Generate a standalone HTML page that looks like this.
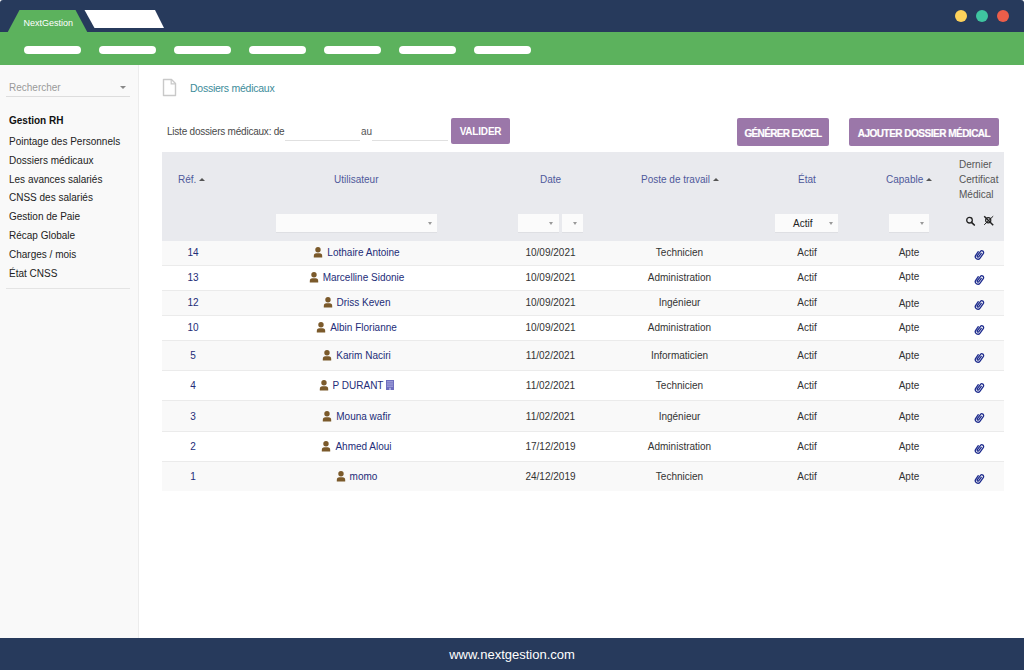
<!DOCTYPE html>
<html><head><meta charset="utf-8"><style>
*{box-sizing:border-box;margin:0;padding:0}
html,body{width:1024px;height:670px;overflow:hidden;background:#fff;font-family:"Liberation Sans",sans-serif;position:relative}
.abs{position:absolute}
.top{position:absolute;left:0;top:0;width:1024px;height:33px;background:#273a5c;border-radius:3px 3px 0 0}
.green{position:absolute;left:0;top:32px;width:1024px;height:33px;background:#5cb25d}
.pill{position:absolute;top:46px;width:57px;height:8px;border-radius:4px;background:#fff}
.dot{position:absolute;top:10px;width:12px;height:12px;border-radius:50%}
.side{position:absolute;left:0;top:65px;width:139px;height:573px;background:#f9f9f9;border-right:1px solid #ececec}
.mi{position:absolute;left:9px;font-size:10px;line-height:12px;color:#222;white-space:nowrap}
.foot{position:absolute;left:0;top:638px;width:1024px;height:32px;background:#273a5c;color:#fff;font-size:13px;text-align:center;line-height:34px}
.btn{position:absolute;background:#9b77a9;color:#fff;font-weight:bold;font-size:10px;text-align:center;border-radius:2px} .bt2{-webkit-text-stroke:0.2px #fff}
.thead{position:absolute;left:162px;top:152px;width:842px;height:89px;background:#e9eaee}
.row{position:absolute;left:162px;width:842px;border-bottom:1px solid #ebebeb}
.c{position:absolute;top:0;height:100%;display:flex;align-items:center;justify-content:center;font-size:10px;color:#333;white-space:nowrap}
.blue{color:#232d78}
.c1{left:0;width:62px} .c2{left:62px;width:265px} .c3{left:327px;width:123px} .c4{left:450px;width:135px} .c5{left:585px;width:120px} .c6{left:705px;width:84px} .c7{left:789px;width:53px;padding-left:3px}
.short .c{padding-bottom:1px} .short .c7{padding-bottom:0} .ui{margin-right:4px} .bi{margin-left:3px;margin-bottom:2px}
.h{position:absolute;font-size:10px;line-height:12px;color:#4f599b;white-space:nowrap}
.tri{display:inline-block;width:0;height:0;border-left:3px solid transparent;border-right:3px solid transparent;border-bottom:3px solid #555;vertical-align:2px;margin-left:3px}
.sel{position:absolute;background:#fbfbfb;height:18px;box-shadow:0 1px 0 #dedfe3}
.arr{position:absolute;top:8px;width:0;height:0;margin-left:0.5px;border-left:2.5px solid transparent;border-right:2.5px solid transparent;border-top:3px solid #999}
.inp{position:absolute;height:1px;background:#e0e0e0}
</style></head><body>
<div class="top"></div>
<div class="green"></div>
<svg class="abs" style="left:0;top:0" width="170" height="33" viewBox="0 0 170 33">
<polygon points="7.5,32.5 19.5,10 75.5,10 87.5,32.5" fill="#5cb25d"/>
<polygon points="84.5,10 155,10 164,28 94.5,28" fill="#fff"/>
</svg>
<div class="abs" style="left:23.5px;top:18px;font-size:9px;line-height:11px;color:#fff;white-space:nowrap">NextGestion</div>
<div class="pill" style="left:23.5px"></div><div class="pill" style="left:98.5px"></div><div class="pill" style="left:173.5px"></div><div class="pill" style="left:248.5px"></div><div class="pill" style="left:323.5px"></div><div class="pill" style="left:398.5px"></div><div class="pill" style="left:473.5px"></div>
<div class="dot" style="left:954.5px;background:#fdd15b"></div>
<div class="dot" style="left:975.5px;background:#3fc4a0"></div>
<div class="dot" style="left:996.5px;background:#ec5e4a"></div>

<div class="side">
<div class="abs" style="left:9px;top:17px;font-size:10px;line-height:12px;color:#999">Rechercher</div>
<div class="abs" style="left:120px;top:21px;width:0;height:0;border-left:3px solid transparent;border-right:3px solid transparent;border-top:3px solid #888"></div>
<div class="abs" style="left:6px;top:31px;width:124px;height:1px;background:#ddd"></div>
<div class="abs" style="left:9px;top:50px;font-size:10px;line-height:12px;font-weight:bold;color:#111">Gestion RH</div>
</div>
<div class="mi" style="top:136.0px">Pointage des Personnels</div><div class="mi" style="top:154.8px">Dossiers médicaux</div><div class="mi" style="top:173.6px">Les avances salariés</div><div class="mi" style="top:192.4px">CNSS des salariés</div><div class="mi" style="top:211.2px">Gestion de Paie</div><div class="mi" style="top:230.0px">Récap Globale</div><div class="mi" style="top:248.8px">Charges / mois</div><div class="mi" style="top:267.6px">État CNSS</div>
<div class="abs" style="left:6px;top:288px;width:124px;height:1px;background:#e4e4e4"></div>

<svg class="abs" style="left:162px;top:78px" width="15" height="19" viewBox="0 0 15 19">
<path d="M1.5 1.5 H9.5 L13.5 5.5 V17.5 H1.5 Z" fill="#fff" stroke="#c9c9c9" stroke-width="1.4" stroke-linejoin="round"/>
<path d="M9.2 1.5 V5.8 H13.5" fill="none" stroke="#c9c9c9" stroke-width="1.2"/>
</svg>
<div class="abs" style="left:190px;top:82px;font-size:10.5px;line-height:12px;color:#3d8c9a;letter-spacing:-0.25px;white-space:nowrap">Dossiers médicaux</div>

<div class="abs" style="left:167px;top:126px;font-size:10px;line-height:12px;color:#4a4a4a;letter-spacing:-0.22px;white-space:nowrap">Liste dossiers médicaux: de</div>
<div class="inp" style="left:285px;top:140px;width:75px"></div>
<div class="abs" style="left:361px;top:126px;font-size:10px;line-height:12px;color:#555;white-space:nowrap">au</div>
<div class="inp" style="left:372px;top:140px;width:76px"></div>
<div class="btn" style="left:451px;top:118px;width:59px;height:26px;line-height:28px;font-size:10px;letter-spacing:-0.2px">VALIDER</div>
<div class="btn bt2" style="left:737px;top:118px;width:92px;height:28px;line-height:31px;letter-spacing:-0.65px">GÉNÉRER EXCEL</div>
<div class="btn bt2" style="left:849px;top:118px;width:150px;height:28px;line-height:31px;letter-spacing:-0.5px">AJOUTER DOSSIER MÉDICAL</div>

<div class="thead"></div>
<div class="h" style="left:178px;top:174px">Réf.<span class="tri"></span></div>
<div class="h" style="left:334px;top:174px">Utilisateur</div>
<div class="h" style="left:540px;top:174px">Date</div>
<div class="h" style="left:641px;top:174px">Poste de travail<span class="tri"></span></div>
<div class="h" style="left:798px;top:174px">État</div>
<div class="h" style="left:886px;top:174px">Capable<span class="tri"></span></div>
<div class="h" style="left:959px;top:157px;color:#555;line-height:15px">Dernier<br>Certificat<br>Médical</div>

<div class="sel" style="left:276px;top:214px;width:161px"><span class="arr" style="left:151px"></span></div>
<div class="sel" style="left:518px;top:214px;width:41px"><span class="arr" style="left:30px"></span></div>
<div class="sel" style="left:562px;top:214px;width:21px"><span class="arr" style="left:10px"></span></div>
<div class="sel" style="left:775px;top:214px;width:63px"><span class="abs" style="left:18px;top:4px;font-size:10px;line-height:12px;color:#222">Actif</span><span class="arr" style="left:53px"></span></div>
<div class="sel" style="left:889px;top:214px;width:40px"><span class="arr" style="left:30px"></span></div>
<svg class="abs" style="left:965px;top:216px" width="11" height="11" viewBox="0 0 11 11"><circle cx="4.5" cy="4.2" r="2.8" fill="none" stroke="#222" stroke-width="1.3"/><path d="M6.5 6.3 L9.3 9.0" stroke="#222" stroke-width="1.7" stroke-linecap="round"/></svg>
<svg class="abs" style="left:983px;top:215px" width="12" height="12" viewBox="0 0 12 12"><circle cx="5.2" cy="5.2" r="2.6" fill="none" stroke="#222" stroke-width="1.2"/><path d="M1.2 1.2 L10.2 10.2" stroke="#222" stroke-width="1.5"/><path d="M10.2 1.2 L1.2 9.8" stroke="#222" stroke-width="1"/></svg>

<div class="row short" style="top:241px;height:25px;background:#f9f9f9;">
<div class="c c1 blue">14</div><div class="c c2 blue"><svg class="ui" width="10" height="11" viewBox="0 0 10 11"><circle cx="5" cy="2.8" r="2.7" fill="#7b5a2b"/><path d="M0.8 10.4 V9 Q0.8 6.2 3.4 6.2 H6.6 Q9.2 6.2 9.2 9 V10.4 Z" fill="#7b5a2b"/></svg><span class="nm">Lothaire Antoine</span></div><div class="c c3">10/09/2021</div><div class="c c4">Technicien</div><div class="c c5">Actif</div><div class="c c6"><span style="position:relative;top:0px">Apte</span></div><div class="c c7"><svg style="margin-top:3px" width="12" height="13" viewBox="0 0 12 13"><g transform="translate(0.6 0.3) rotate(36 6 6.5)"><path d="M6.5 4.4 V8.5 A0.9 0.9 0 0 1 4.7 8.5 V3.4 A1.8 1.8 0 0 1 8.3 3.4 V8.9 A2.6 2.6 0 0 1 3.1 8.9 V4.8" fill="none" stroke="#1c2a8c" stroke-width="1.3" stroke-linecap="round"/></g></svg></div></div>
<div class="row short" style="top:266px;height:25px;background:#ffffff;">
<div class="c c1 blue">13</div><div class="c c2 blue"><svg class="ui" width="10" height="11" viewBox="0 0 10 11"><circle cx="5" cy="2.8" r="2.7" fill="#7b5a2b"/><path d="M0.8 10.4 V9 Q0.8 6.2 3.4 6.2 H6.6 Q9.2 6.2 9.2 9 V10.4 Z" fill="#7b5a2b"/></svg><span class="nm">Marcelline Sidonie</span></div><div class="c c3">10/09/2021</div><div class="c c4">Administration</div><div class="c c5">Actif</div><div class="c c6"><span style="position:relative;top:-1.5px">Apte</span></div><div class="c c7"><svg style="margin-top:3px" width="12" height="13" viewBox="0 0 12 13"><g transform="translate(0.6 0.3) rotate(36 6 6.5)"><path d="M6.5 4.4 V8.5 A0.9 0.9 0 0 1 4.7 8.5 V3.4 A1.8 1.8 0 0 1 8.3 3.4 V8.9 A2.6 2.6 0 0 1 3.1 8.9 V4.8" fill="none" stroke="#1c2a8c" stroke-width="1.3" stroke-linecap="round"/></g></svg></div></div>
<div class="row short" style="top:291px;height:25px;background:#f9f9f9;">
<div class="c c1 blue">12</div><div class="c c2 blue"><svg class="ui" width="10" height="11" viewBox="0 0 10 11"><circle cx="5" cy="2.8" r="2.7" fill="#7b5a2b"/><path d="M0.8 10.4 V9 Q0.8 6.2 3.4 6.2 H6.6 Q9.2 6.2 9.2 9 V10.4 Z" fill="#7b5a2b"/></svg><span class="nm">Driss Keven</span></div><div class="c c3">10/09/2021</div><div class="c c4">Ingénieur</div><div class="c c5">Actif</div><div class="c c6"><span style="position:relative;top:1px">Apte</span></div><div class="c c7"><svg style="margin-top:3px" width="12" height="13" viewBox="0 0 12 13"><g transform="translate(0.6 0.3) rotate(36 6 6.5)"><path d="M6.5 4.4 V8.5 A0.9 0.9 0 0 1 4.7 8.5 V3.4 A1.8 1.8 0 0 1 8.3 3.4 V8.9 A2.6 2.6 0 0 1 3.1 8.9 V4.8" fill="none" stroke="#1c2a8c" stroke-width="1.3" stroke-linecap="round"/></g></svg></div></div>
<div class="row short" style="top:316px;height:25px;background:#ffffff;">
<div class="c c1 blue">10</div><div class="c c2 blue"><svg class="ui" width="10" height="11" viewBox="0 0 10 11"><circle cx="5" cy="2.8" r="2.7" fill="#7b5a2b"/><path d="M0.8 10.4 V9 Q0.8 6.2 3.4 6.2 H6.6 Q9.2 6.2 9.2 9 V10.4 Z" fill="#7b5a2b"/></svg><span class="nm">Albin Florianne</span></div><div class="c c3">10/09/2021</div><div class="c c4">Administration</div><div class="c c5">Actif</div><div class="c c6"><span style="position:relative;top:0px">Apte</span></div><div class="c c7"><svg style="margin-top:3px" width="12" height="13" viewBox="0 0 12 13"><g transform="translate(0.6 0.3) rotate(36 6 6.5)"><path d="M6.5 4.4 V8.5 A0.9 0.9 0 0 1 4.7 8.5 V3.4 A1.8 1.8 0 0 1 8.3 3.4 V8.9 A2.6 2.6 0 0 1 3.1 8.9 V4.8" fill="none" stroke="#1c2a8c" stroke-width="1.3" stroke-linecap="round"/></g></svg></div></div>
<div class="row" style="top:341px;height:30px;background:#f9f9f9;">
<div class="c c1 blue">5</div><div class="c c2 blue"><svg class="ui" width="10" height="11" viewBox="0 0 10 11"><circle cx="5" cy="2.8" r="2.7" fill="#7b5a2b"/><path d="M0.8 10.4 V9 Q0.8 6.2 3.4 6.2 H6.6 Q9.2 6.2 9.2 9 V10.4 Z" fill="#7b5a2b"/></svg><span class="nm">Karim Naciri</span></div><div class="c c3">11/02/2021</div><div class="c c4">Informaticien</div><div class="c c5">Actif</div><div class="c c6"><span style="position:relative;top:0px">Apte</span></div><div class="c c7"><svg style="margin-top:3px" width="12" height="13" viewBox="0 0 12 13"><g transform="translate(0.6 0.3) rotate(36 6 6.5)"><path d="M6.5 4.4 V8.5 A0.9 0.9 0 0 1 4.7 8.5 V3.4 A1.8 1.8 0 0 1 8.3 3.4 V8.9 A2.6 2.6 0 0 1 3.1 8.9 V4.8" fill="none" stroke="#1c2a8c" stroke-width="1.3" stroke-linecap="round"/></g></svg></div></div>
<div class="row" style="top:371px;height:30px;background:#ffffff;">
<div class="c c1 blue">4</div><div class="c c2 blue"><svg class="ui" width="10" height="11" viewBox="0 0 10 11"><circle cx="5" cy="2.8" r="2.7" fill="#7b5a2b"/><path d="M0.8 10.4 V9 Q0.8 6.2 3.4 6.2 H6.6 Q9.2 6.2 9.2 9 V10.4 Z" fill="#7b5a2b"/></svg><span class="nm">P DURANT</span><svg class="bi" width="8" height="10" viewBox="0 0 8 10"><rect x="0" y="0" width="8" height="10" fill="#6f6fbf"/><g fill="#b9b9e6"><rect x="1.3" y="1.2" width="1.4" height="1.2"/><rect x="3.3" y="1.2" width="1.4" height="1.2"/><rect x="5.3" y="1.2" width="1.4" height="1.2"/><rect x="1.3" y="3.4" width="1.4" height="1.2"/><rect x="3.3" y="3.4" width="1.4" height="1.2"/><rect x="5.3" y="3.4" width="1.4" height="1.2"/><rect x="1.3" y="5.6" width="1.4" height="1.2"/><rect x="3.3" y="5.6" width="1.4" height="1.2"/><rect x="5.3" y="5.6" width="1.4" height="1.2"/><rect x="3.2" y="7.8" width="1.6" height="2.2"/></g></svg></div><div class="c c3">11/02/2021</div><div class="c c4">Technicien</div><div class="c c5">Actif</div><div class="c c6"><span style="position:relative;top:0px">Apte</span></div><div class="c c7"><svg style="margin-top:3px" width="12" height="13" viewBox="0 0 12 13"><g transform="translate(0.6 0.3) rotate(36 6 6.5)"><path d="M6.5 4.4 V8.5 A0.9 0.9 0 0 1 4.7 8.5 V3.4 A1.8 1.8 0 0 1 8.3 3.4 V8.9 A2.6 2.6 0 0 1 3.1 8.9 V4.8" fill="none" stroke="#1c2a8c" stroke-width="1.3" stroke-linecap="round"/></g></svg></div></div>
<div class="row" style="top:401px;height:31px;background:#f9f9f9;">
<div class="c c1 blue">3</div><div class="c c2 blue"><svg class="ui" width="10" height="11" viewBox="0 0 10 11"><circle cx="5" cy="2.8" r="2.7" fill="#7b5a2b"/><path d="M0.8 10.4 V9 Q0.8 6.2 3.4 6.2 H6.6 Q9.2 6.2 9.2 9 V10.4 Z" fill="#7b5a2b"/></svg><span class="nm">Mouna wafir</span></div><div class="c c3">11/02/2021</div><div class="c c4">Ingénieur</div><div class="c c5">Actif</div><div class="c c6"><span style="position:relative;top:0px">Apte</span></div><div class="c c7"><svg style="margin-top:3px" width="12" height="13" viewBox="0 0 12 13"><g transform="translate(0.6 0.3) rotate(36 6 6.5)"><path d="M6.5 4.4 V8.5 A0.9 0.9 0 0 1 4.7 8.5 V3.4 A1.8 1.8 0 0 1 8.3 3.4 V8.9 A2.6 2.6 0 0 1 3.1 8.9 V4.8" fill="none" stroke="#1c2a8c" stroke-width="1.3" stroke-linecap="round"/></g></svg></div></div>
<div class="row" style="top:432px;height:30px;background:#ffffff;">
<div class="c c1 blue">2</div><div class="c c2 blue"><svg class="ui" width="10" height="11" viewBox="0 0 10 11"><circle cx="5" cy="2.8" r="2.7" fill="#7b5a2b"/><path d="M0.8 10.4 V9 Q0.8 6.2 3.4 6.2 H6.6 Q9.2 6.2 9.2 9 V10.4 Z" fill="#7b5a2b"/></svg><span class="nm">Ahmed Aloui</span></div><div class="c c3">17/12/2019</div><div class="c c4">Administration</div><div class="c c5">Actif</div><div class="c c6"><span style="position:relative;top:0px">Apte</span></div><div class="c c7"><svg style="margin-top:3px" width="12" height="13" viewBox="0 0 12 13"><g transform="translate(0.6 0.3) rotate(36 6 6.5)"><path d="M6.5 4.4 V8.5 A0.9 0.9 0 0 1 4.7 8.5 V3.4 A1.8 1.8 0 0 1 8.3 3.4 V8.9 A2.6 2.6 0 0 1 3.1 8.9 V4.8" fill="none" stroke="#1c2a8c" stroke-width="1.3" stroke-linecap="round"/></g></svg></div></div>
<div class="row" style="top:462px;height:29px;background:#f9f9f9;border-bottom:none;">
<div class="c c1 blue">1</div><div class="c c2 blue"><svg class="ui" width="10" height="11" viewBox="0 0 10 11"><circle cx="5" cy="2.8" r="2.7" fill="#7b5a2b"/><path d="M0.8 10.4 V9 Q0.8 6.2 3.4 6.2 H6.6 Q9.2 6.2 9.2 9 V10.4 Z" fill="#7b5a2b"/></svg><span class="nm">momo</span></div><div class="c c3">24/12/2019</div><div class="c c4">Technicien</div><div class="c c5">Actif</div><div class="c c6"><span style="position:relative;top:0px">Apte</span></div><div class="c c7"><svg style="margin-top:3px" width="12" height="13" viewBox="0 0 12 13"><g transform="translate(0.6 0.3) rotate(36 6 6.5)"><path d="M6.5 4.4 V8.5 A0.9 0.9 0 0 1 4.7 8.5 V3.4 A1.8 1.8 0 0 1 8.3 3.4 V8.9 A2.6 2.6 0 0 1 3.1 8.9 V4.8" fill="none" stroke="#1c2a8c" stroke-width="1.3" stroke-linecap="round"/></g></svg></div></div>

<div class="foot">www.nextgestion.com</div>
</body></html>
